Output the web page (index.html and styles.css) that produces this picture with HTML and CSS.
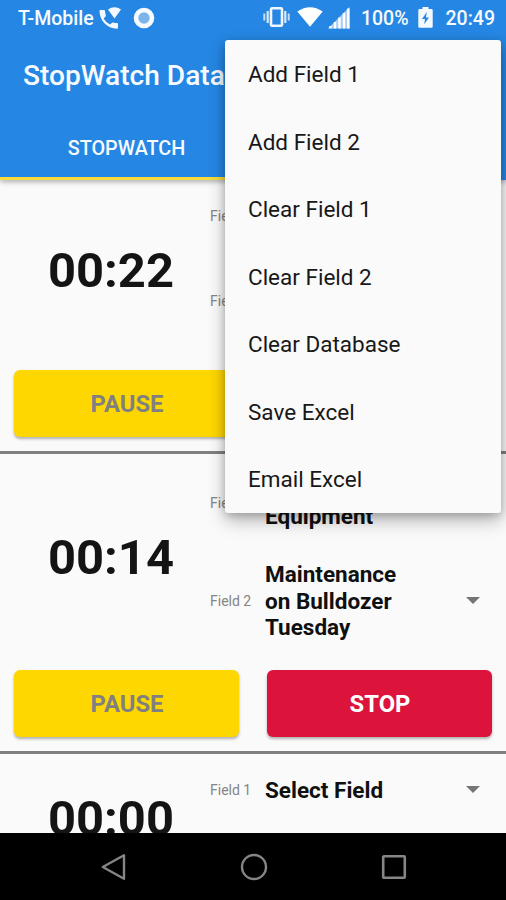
FILE: index.html
```html
<!DOCTYPE html>
<html lang="en">
<head>
    <meta charset="UTF-8">
    <meta name="viewport" content="width=device-width, initial-scale=1.0">
    <title>StopWatch Data</title>
    <link rel="stylesheet" href="styles.css">
</head>
<body>
    <div class="phone">
        <header class="header">
            <div class="status">
                <span class="carrier">T-Mobile</span>
                <svg class="icon-call" width="22" height="23" viewBox="0 0 22 23">
                    <path d="M0.500 3.500 Q0.500 3 1.500 3 H5 Q6 3 6 4 Q6.200 6.500 6.800 8.300 Q7 9 6.500 9.500 L4.600 11.400 Q7 15.600 11 17.600 L13 15.700 Q13.500 15.200 14.300 15.500 Q16 16 18 16.100 Q19 16.200 19 17.200 V20.500 Q19 21.700 18 21.700 C8 21.700 0.500 13.500 0.500 3.500 Z" fill="#f4f9ff"/>
                    <path d="M9 2.600 Q15.500 -2 22 2.600 L15.500 11.500 Z" fill="#f4f9ff"/>
                </svg>
                <svg class="icon-record" width="22" height="22" viewBox="0 0 22 22">
                    <circle cx="11" cy="11" r="8" fill="#7db4ec" stroke="#f7fbff" stroke-width="4.600"/>
                </svg>
                <svg class="icon-vibrate" width="27" height="22" viewBox="0 0 27 22">
                    <rect x="8" y="2.200" width="11" height="17.600" rx="1" fill="none" stroke="#eef6ff" stroke-width="2.600"/>
                    <path d="M4.700 5 V17 M22.300 5 V17" stroke="#d9e9fb" stroke-width="2.200"/>
                    <path d="M1.300 7.500 V14.500 M25.700 7.500 V14.500" stroke="#c3dcf8" stroke-width="2"/>
                </svg>
                <svg class="icon-wifi" width="26" height="20" viewBox="0 0 26 20">
                    <path d="M0.300 4.600 Q13 -4 25.700 4.600 L13 19.800 Z" fill="#fff"/>
                </svg>
                <svg class="icon-signal" width="22" height="22" viewBox="0 0 22 22">
                    <path d="M0 21.500 L21.500 0 V21.500 Z" fill="#a9cdf5"/>
                    <path d="M2.500 21.500 V19 M7 21.500 V15 M11.500 21.500 V10.500 M16 21.500 V6 M20.300 21.500 V1.500" stroke="#fff" stroke-width="2.400"/>
                </svg>
                <span class="percent">100%</span>
                <svg class="icon-battery" width="15" height="21" viewBox="0 0 15 21">
                    <path d="M4.500 0 H10.500 V2 H13.500 Q14.700 2 14.700 3.200 V19.500 Q14.700 20.700 13.500 20.700 H1.500 Q0.300 20.700 0.300 19.500 V3.200 Q0.300 2 1.500 2 H4.500 Z" fill="#f4f9ff"/>
                    <path d="M8.800 5 L4 12 H7 L6.200 17.300 L11 10.500 H8 Z" fill="#2587e3"/>
                </svg>
                <span class="clock">20:49</span>
            </div>
            <h1 class="title">StopWatch Data</h1>
            <div class="tabs">
                <div class="tab tab-active">STOPWATCH</div>
                <div class="tab"></div>
            </div>
        </header>

        <main class="list">
            <section class="card">
                <div class="card-top">
                    <div class="timer">00:22</div>
                    <div class="fields">
                        <div class="field"><span class="label">Field 1</span></div>
                        <div class="field lines-3"><span class="label">Field 2</span></div>
                    </div>
                </div>
                <div class="buttons">
                    <button class="button pause">PAUSE</button>
                    <button class="button stop">STOP</button>
                </div>
            </section>

            <section class="card">
                <div class="card-top">
                    <div class="timer">00:14</div>
                    <div class="fields">
                        <div class="field lines-2">
                            <span class="label">Field 1</span>
                            <span class="value value-end">Equipment</span>
                        </div>
                        <div class="field lines-3">
                            <span class="label">Field 2</span>
                            <span class="value">Maintenance on Bulldozer Tuesday</span>
                            <span class="arrow"></span>
                        </div>
                    </div>
                </div>
                <div class="buttons">
                    <button class="button pause">PAUSE</button>
                    <button class="button stop">STOP</button>
                </div>
            </section>

            <section class="card">
                <div class="card-top">
                    <div class="timer">00:00</div>
                    <div class="fields">
                        <div class="field">
                            <span class="label">Field 1</span>
                            <span class="value">Select Field</span>
                            <span class="arrow"></span>
                        </div>
                        <div class="field"></div>
                    </div>
                </div>
            </section>
        </main>

        <nav class="navbar">
            <svg width="28" height="28" viewBox="0 0 28 28">
                <path d="M2.800 14 L24 2.300 V25.700 Z" fill="none" stroke="#858585" stroke-width="2.400" stroke-linejoin="round"/>
            </svg>
            <svg width="28" height="28" viewBox="0 0 28 28">
                <circle cx="14" cy="14" r="12" fill="none" stroke="#858585" stroke-width="2.400"/>
            </svg>
            <svg width="28" height="28" viewBox="0 0 28 28">
                <rect x="3.200" y="3.200" width="21.600" height="21.600" rx="0.800" fill="none" stroke="#858585" stroke-width="2.600"/>
            </svg>
        </nav>

        <!-- overflow menu -->
        <div class="menu">
            <div class="menu-item">Add Field 1</div>
            <div class="menu-item">Add Field 2</div>
            <div class="menu-item">Clear Field 1</div>
            <div class="menu-item">Clear Field 2</div>
            <div class="menu-item">Clear Database</div>
            <div class="menu-item">Save Excel</div>
            <div class="menu-item">Email Excel</div>
        </div>
    </div>
</body>
</html>
```
FILE: styles.css
```css
* {
    box-sizing: border-box;
}

body {
    margin: 0;
    font-family: Roboto, sans-serif;
    background-color: #fafafa;
}

.phone {
    position: relative;
    display: flex;
    flex-direction: column;
    width: 506px;
    height: 900px;
    overflow: hidden;
}

.header {
    flex: none;
    display: flex;
    flex-direction: column;
    height: 180px;
    background-color: #2587e3;
    color: #f7fbff;
    box-shadow: 0 2px 5px rgba(0, 0, 0, 0.3);
    z-index: 1;
}

.status {
    display: flex;
    align-items: center;
    height: 36px;
    padding: 0 11px 0 18px;
    font-size: 19.5px;
    font-weight: 500;
}

.icon-call {
    margin-left: 5px;
}

.icon-record {
    margin-left: 12px;
}

.icon-vibrate {
    margin-left: auto;
    margin-top: -2px;
}

.icon-wifi {
    margin-left: 7px;
    margin-top: -2px;
}

.icon-signal {
    margin-left: 5px;
}

.percent {
    margin-left: 11px;
}

.icon-battery {
    margin-left: 9px;
    margin-top: -2px;
}

.clock {
    margin-left: 13px;
}

.title {
    margin: 0;
    padding-left: 23px;
    height: 79px;
    line-height: 79px;
    font-size: 28.1px;
    font-weight: 500;
}

.tabs {
    display: flex;
    flex: 1;
}

.tab {
    flex: 1;
    padding-top: 22px;
    text-align: center;
    font-size: 19.8px;
    line-height: 24px;
    font-weight: 500;
}

.tab-active {
    border-bottom: 3px solid #f7dc3c;
}

.list {
    flex: 1;
    min-height: 0;
    overflow: hidden;
}

.card {
    border-bottom: 3px solid #808080;
    padding: 22.6px 14px 14px;
}

.card-top {
    display: flex;
}

.timer {
    display: flex;
    align-items: center;
    width: 196px;
    padding-left: 34px;
    font-size: 48.9px;
    line-height: 58px;
    font-weight: 700;
    color: #141414;
}

.fields {
    display: flex;
    flex-direction: column;
    flex: 1;
    gap: 32px;
}

.field {
    display: flex;
    align-items: center;
    min-height: 26.4px;
}

.lines-2 {
    min-height: 52.8px;
}

.lines-3 {
    min-height: 79.2px;
}

.label {
    width: 55px;
    font-size: 14px;
    line-height: 16px;
    color: #858585;
}

.value {
    width: 150px;
    font-size: 22.5px;
    line-height: 26.4px;
    font-weight: 700;
    color: #101010;
}

.value-end {
    align-self: flex-end;
}

.arrow {
    margin-left: auto;
    margin-right: 12px;
    border: 7px solid transparent;
    border-top-color: #757575;
    border-bottom: 0;
}

.buttons {
    display: flex;
    gap: 28px;
    margin-top: 29.4px;
}

.button {
    flex: 1;
    height: 67.2px;
    padding: 2px 0 0 1px;
    border: none;
    border-radius: 6px;
    font-family: inherit;
    font-size: 23.8px;
    font-weight: 700;
    box-shadow: 0 2px 3px rgba(0, 0, 0, 0.3);
}

.pause {
    background-color: #ffd700;
    color: #808080;
}

.stop {
    background-color: #dc143c;
    color: white;
}

.navbar {
    flex: none;
    display: flex;
    justify-content: center;
    align-items: center;
    gap: 112px;
    height: 67px;
    padding-left: 1px;
    background-color: black;
    z-index: 1;
}

.menu {
    position: absolute;
    top: 40px;
    left: 225px;
    width: 276px;
    border-radius: 3px;
    background-color: #fafafa;
    box-shadow: 0 8px 18px rgba(0, 0, 0, 0.27), 0 2px 8px rgba(0, 0, 0, 0.2);
    z-index: 2;
}

.menu-item {
    height: 67.5px;
    padding-left: 23px;
    line-height: 69px;
    font-size: 22.5px;
    color: #181818;
}
```
